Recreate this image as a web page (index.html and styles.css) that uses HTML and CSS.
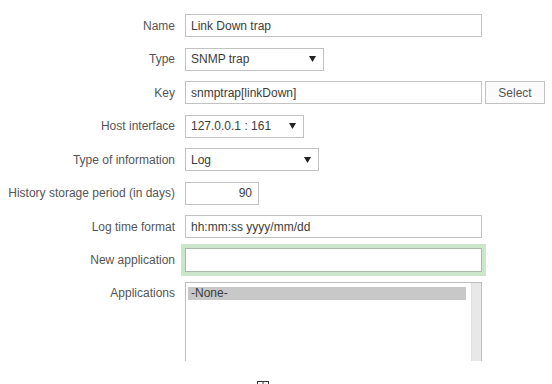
FILE: index.html
```html
<!DOCTYPE html>
<html lang="en">
  <head>
    <meta charset="UTF-8" />
    <title>Item</title>
    <link rel="stylesheet" href="styles.css">
  </head>
  <body>
    <div class="form">
      <label class="lbl">Name</label>
      <div class="field"><input class="text wide" type="text" value="Link Down trap" /></div>

      <label class="lbl">Type</label>
      <div class="field">
        <div class="select w-type"><span>SNMP trap</span><svg width="7" height="6" viewBox="0 0 7 6"><path d="M0 0H7L3.5 6Z" fill="#222"/></svg></div>
      </div>

      <label class="lbl">Key</label>
      <div class="field">
        <input class="text wide" type="text" value="snmptrap[linkDown]" />
        <button class="btn">Select</button>
      </div>

      <label class="lbl">Host interface</label>
      <div class="field">
        <div class="select w-host"><span>127.0.0.1 : 161</span><svg width="7" height="6" viewBox="0 0 7 6"><path d="M0 0H7L3.5 6Z" fill="#222"/></svg></div>
      </div>

      <label class="lbl">Type of information</label>
      <div class="field">
        <div class="select w-info"><span>Log</span><svg width="7" height="6" viewBox="0 0 7 6"><path d="M0 0H7L3.5 6Z" fill="#222"/></svg></div>
      </div>

      <label class="lbl">History storage period (in days)</label>
      <div class="field"><input class="text num" type="text" value="90" /></div>

      <label class="lbl">Log time format</label>
      <div class="field"><input class="text wide" type="text" value="hh:mm:ss yyyy/mm/dd" /></div>

      <label class="lbl">New application</label>
      <div class="field"><input class="text wide focus" type="text" value="" /></div>

      <label class="lbl top">Applications</label>
      <div class="field">
        <div class="listbox">
          <div class="options">
            <div class="opt sel">-None-</div>
          </div>
          <div class="scroll"></div>
        </div>
      </div>
    </div>
    <div class="foot">
      <svg width="12" height="10" viewBox="0 0 12 10"><rect x="0.5" y="0.5" width="11" height="11" fill="none" stroke="#333"/><path d="M6 1V4" stroke="#333"/></svg>
    </div>
  </body>
</html>
```

FILE: styles.css
```css
body {
  margin: 0;
  background: #fff;
  font-family: "Liberation Sans", Arial, sans-serif;
  font-size: 12px;
  color: #555;
}

.form {
  display: grid;
  grid-template-columns: 175px 1fr;
  column-gap: 10px;
  row-gap: 10.5px;
  padding-top: 14px;
}

.lbl {
  text-align: right;
  align-self: center;
  white-space: nowrap;
}

.lbl.top {
  align-self: start;
  line-height: 23px;
}

.field {
  display: flex;
  align-items: center;
  gap: 3px;
  height: 23px;
}

.text {
  box-sizing: border-box;
  height: 23px;
  margin: 0;
  padding: 0 5px;
  border: 1px solid #c2c2c2;
  border-radius: 0;
  font-family: inherit;
  font-size: 12px;
  color: #3c3c3c;
  outline: none;
}

.wide {
  width: 297px;
}

.num {
  width: 74px;
  text-align: right;
  padding-right: 6px;
}

.focus {
  height: 24px;
  border-color: #a9b9a9;
  box-shadow: 0 0 0 4px #cbe6cb;
}

.select {
  box-sizing: border-box;
  height: 23px;
  display: flex;
  align-items: center;
  justify-content: space-between;
  padding: 0 7px 0 5px;
  border: 1px solid #c2c2c2;
  color: #3c3c3c;
}

.w-type {
  width: 139px;
}

.w-host {
  width: 119px;
}

.w-info {
  width: 134px;
}

.btn {
  box-sizing: border-box;
  width: 60px;
  height: 23px;
  margin: 0;
  padding: 0;
  border: 1px solid #c2c2c2;
  background: #fbfbfb;
  font-family: inherit;
  font-size: 12px;
  color: #555;
}

.listbox {
  box-sizing: border-box;
  width: 297px;
  height: 79px;
  display: flex;
  border: 1px solid #bdbdbd;
  border-bottom: none;
  align-self: flex-start;
}

.field:last-child {
  height: 79px;
}

.options {
  flex: 1;
  padding: 4px 5px 0 2px;
}

.opt {
  height: 13px;
  line-height: 13px;
  padding-left: 3px;
  color: #3c3c3c;
}

.opt.sel {
  background: #c8c8c8;
}

.scroll {
  width: 9px;
  background: #e8e8e8;
  border-left: 1px solid #e0e0e0;
}

.foot {
  margin-top: 20px;
  padding-left: 257px;
  line-height: 0;
}
```
